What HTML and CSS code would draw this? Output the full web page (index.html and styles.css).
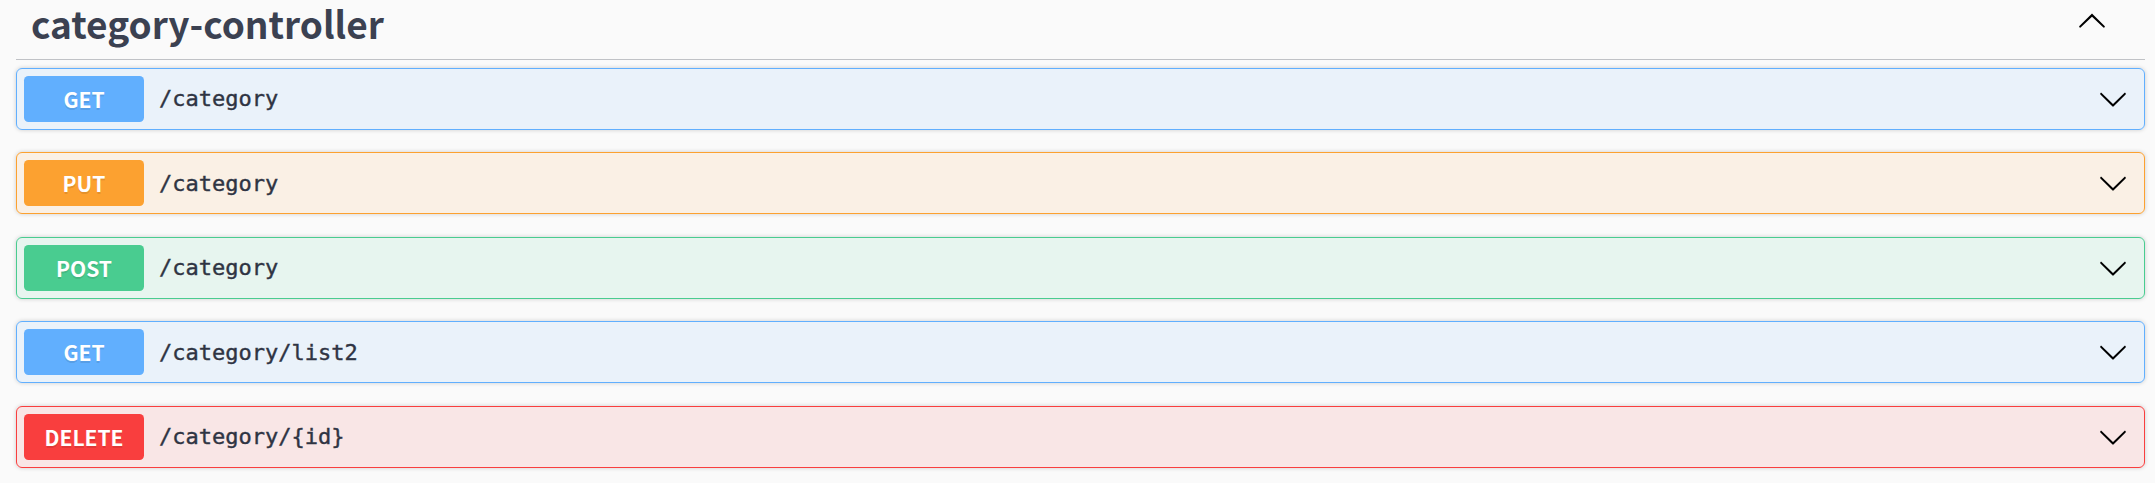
FILE: index.html
```html
<!DOCTYPE html>
<html>
<head>
<meta charset="utf-8">
<link rel="stylesheet" href="styles.css">
</head>
<body>
<div class="section">
  <div class="tag">
    <span class="tag-name">category-controller</span>
    <svg class="arrow arrow-tag" viewBox="0 0 20 20" width="30" height="30"><path d="M17.418 14.891c.272.268.709.268.979 0s.271-.701 0-.969l-7.908-7.83c-.27-.268-.707-.268-.979 0l-7.908 7.83c-.27.268-.27.701 0 .969.271.268.709.268.979 0L10 7.75l7.418 7.141z"/></svg>
  </div>
  <div class="op op-get">
    <span class="method">GET</span>
    <span class="path">/category</span>
    <svg class="arrow" viewBox="0 0 20 20" width="30" height="30"><path d="M17.418 6.109c.272-.268.709-.268.979 0s.271.701 0 .969l-7.908 7.83c-.27.268-.707.268-.979 0l-7.908-7.83c-.27-.268-.27-.701 0-.969.271-.268.709-.268.979 0L10 13.25l7.418-7.141z"/></svg>
  </div>
  <div class="op op-put">
    <span class="method">PUT</span>
    <span class="path">/category</span>
    <svg class="arrow" viewBox="0 0 20 20" width="30" height="30"><path d="M17.418 6.109c.272-.268.709-.268.979 0s.271.701 0 .969l-7.908 7.83c-.27.268-.707.268-.979 0l-7.908-7.83c-.27-.268-.27-.701 0-.969.271-.268.709-.268.979 0L10 13.25l7.418-7.141z"/></svg>
  </div>
  <div class="op op-post">
    <span class="method">POST</span>
    <span class="path">/category</span>
    <svg class="arrow" viewBox="0 0 20 20" width="30" height="30"><path d="M17.418 6.109c.272-.268.709-.268.979 0s.271.701 0 .969l-7.908 7.83c-.27.268-.707.268-.979 0l-7.908-7.83c-.27-.268-.27-.701 0-.969.271-.268.709-.268.979 0L10 13.25l7.418-7.141z"/></svg>
  </div>
  <div class="op op-get">
    <span class="method">GET</span>
    <span class="path">/category/list2</span>
    <svg class="arrow" viewBox="0 0 20 20" width="30" height="30"><path d="M17.418 6.109c.272-.268.709-.268.979 0s.271.701 0 .969l-7.908 7.83c-.27.268-.707.268-.979 0l-7.908-7.83c-.27-.268-.27-.701 0-.969.271-.268.709-.268.979 0L10 13.25l7.418-7.141z"/></svg>
  </div>
  <div class="op op-delete">
    <span class="method">DELETE</span>
    <span class="path">/category/{id}</span>
    <svg class="arrow" viewBox="0 0 20 20" width="30" height="30"><path d="M17.418 6.109c.272-.268.709-.268.979 0s.271.701 0 .969l-7.908 7.83c-.27.268-.707.268-.979 0l-7.908-7.83c-.27-.268-.27-.701 0-.969.271-.268.709-.268.979 0L10 13.25l7.418-7.141z"/></svg>
  </div>
</div>
</body>
</html>
```

FILE: styles.css
```css
html, body {
  margin: 0;
  padding: 0;
  background: #fafafa;
}
body {
  font-family: "Noto Sans CJK KR", "Noto Sans", sans-serif;
  color: #3b4151;
}
.section {
  padding: 0 10px 0 16px;
}
.tag {
  display: flex;
  align-items: center;
  height: 59px;
  padding: 0 38px 0 15px;
  border-bottom: 1.5px solid rgba(59, 65, 81, 0.3);
  margin-bottom: 7.5px;
}
.tag-name {
  flex: 1;
  font-size: 37px;
  font-weight: 700;
  line-height: 1;
  padding-bottom: 12px;
}
.arrow-tag {
  align-self: flex-start;
  margin-top: 5px;
}
.arrow {
  fill: #000;
  flex: none;
}
.op {
  display: flex;
  align-items: center;
  padding: 7px 16px 7px 7px;
  border: 1.5px solid;
  border-radius: 6px;
  margin-bottom: 22.5px;
  box-shadow: 0 0 4.5px rgba(0, 0, 0, 0.19);
}
.method {
  min-width: 120px;
  padding: 9px 0;
  text-align: center;
  border-radius: 4.5px;
  font-size: 21px;
  line-height: 28px;
  font-weight: 700;
  color: #fff;
  text-shadow: 0 1.5px 0 rgba(0, 0, 0, 0.1);
}
.path {
  flex: 1;
  padding: 0 15px;
  font-family: "DejaVu Sans Mono", "Liberation Mono", monospace;
  font-size: 22px;
  font-weight: 400;
  color: #2f3443;
  -webkit-text-stroke: 0.4px #2f3443;
}
.op-get { background: rgba(97, 175, 254, 0.1); border-color: #61affe; }
.op-get .method { background: #61affe; }
.op-put { background: rgba(252, 161, 48, 0.1); border-color: #fca130; }
.op-put .method { background: #fca130; }
.op-post { background: rgba(73, 204, 144, 0.1); border-color: #49cc90; }
.op-post .method { background: #49cc90; }
.op-delete { background: rgba(249, 62, 62, 0.1); border-color: #f93e3e; }
.op-delete .method { background: #f93e3e; }
```
